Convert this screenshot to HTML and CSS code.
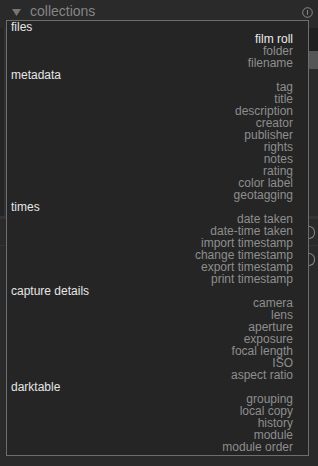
FILE: index.html
```html
<!DOCTYPE html>
<html>
<head>
<meta charset="utf-8">
<link rel="stylesheet" href="styles.css">
</head>
<body>
<div class="app">
  <div class="header">
    <svg class="arrow" width="9" height="7" viewBox="0 0 9 7"><polygon points="0,0 9,0 4.5,7" fill="#767676"/></svg>
    <span class="title">collections</span>
    <svg class="info" width="11" height="11" viewBox="0 0 11 11"><circle cx="5.5" cy="5.5" r="4.8" fill="none" stroke="#8a8a8a" stroke-width="1"/><line x1="5.5" y1="3" x2="5.5" y2="7.8" stroke="#8a8a8a" stroke-width="1"/></svg>
  </div>
  <div class="panel">
    <div class="strip"></div>
    <div class="mid"></div>
    <div class="side">
      <div class="drop"></div>
      <div class="scroll"></div>
    </div>
  </div>
  <div class="sep"></div>
  <div class="row"><span class="half"></span></div>
  <div class="sep2"></div>
  <div class="row"><span class="half"></span></div>

  <div class="popup">
    <div class="hd">files</div>
    <div class="it sel">film roll</div>
    <div class="it">folder</div>
    <div class="it">filename</div>
    <div class="hd">metadata</div>
    <div class="it">tag</div>
    <div class="it">title</div>
    <div class="it">description</div>
    <div class="it">creator</div>
    <div class="it">publisher</div>
    <div class="it">rights</div>
    <div class="it">notes</div>
    <div class="it">rating</div>
    <div class="it">color label</div>
    <div class="it">geotagging</div>
    <div class="hd">times</div>
    <div class="it">date taken</div>
    <div class="it">date-time taken</div>
    <div class="it">import timestamp</div>
    <div class="it">change timestamp</div>
    <div class="it">export timestamp</div>
    <div class="it">print timestamp</div>
    <div class="hd">capture details</div>
    <div class="it">camera</div>
    <div class="it">lens</div>
    <div class="it">aperture</div>
    <div class="it">exposure</div>
    <div class="it">focal length</div>
    <div class="it">ISO</div>
    <div class="it">aspect ratio</div>
    <div class="hd">darktable</div>
    <div class="it">grouping</div>
    <div class="it">local copy</div>
    <div class="it">history</div>
    <div class="it">module</div>
    <div class="it">module order</div>
  </div>
</div>
</body>
</html>
```
FILE: styles.css
```css
html, body {
  margin: 0;
  padding: 0;
  background: #2a2a2a;
}
.app {
  position: relative;
  width: 318px;
  height: 466px;
  overflow: hidden;
  font-family: "Liberation Sans", Arial, sans-serif;
}
.header {
  height: 22px;
  display: flex;
  align-items: center;
  padding-left: 12px;
  padding-right: 5px;
  box-sizing: border-box;
}
.arrow {
  display: block;
  margin-right: 9px;
  margin-top: 2px;
}
.title {
  color: #858585;
  font-size: 14px;
  flex: 1;
}
.info { display: block; margin-top: 2px; }
.panel {
  margin-top: 6px;
  height: 188px;
  display: flex;
}
.strip {
  width: 4px;
  background: #242424;
  border-right: 2px solid #303030;
}
.mid { flex: 1; }
.side {
  width: 9px;
  display: flex;
  flex-direction: column;
}
.drop {
  height: 23px;
  background: #1f1f1f;
}
.scroll {
  height: 18px;
  background: #565656;
}
.sep {
  height: 3px;
  background: #343434;
}
.row {
  height: 26px;
  display: flex;
  justify-content: flex-end;
  align-items: center;
}
.half {
  width: 5px;
  height: 11px;
  border: 1px solid #8a8a8a;
  border-left: none;
  border-radius: 0 6px 6px 0;
  margin-right: 3px;
}
.sep2 {
  height: 1px;
  background: #343434;
}
.popup {
  position: absolute;
  left: 6px;
  top: 20px;
  width: 303px;
  box-sizing: border-box;
  background: #252525;
  border: 1px solid #6e6e6e;
  padding: 0 15px 2px 4px;
  font-size: 12px;
  line-height: 12px;
}
.hd {
  color: #e6e6e6;
  text-align: left;
}
.it {
  color: #8e8e8e;
  text-align: right;
}
.it.sel {
  color: #ececec;
}
```
